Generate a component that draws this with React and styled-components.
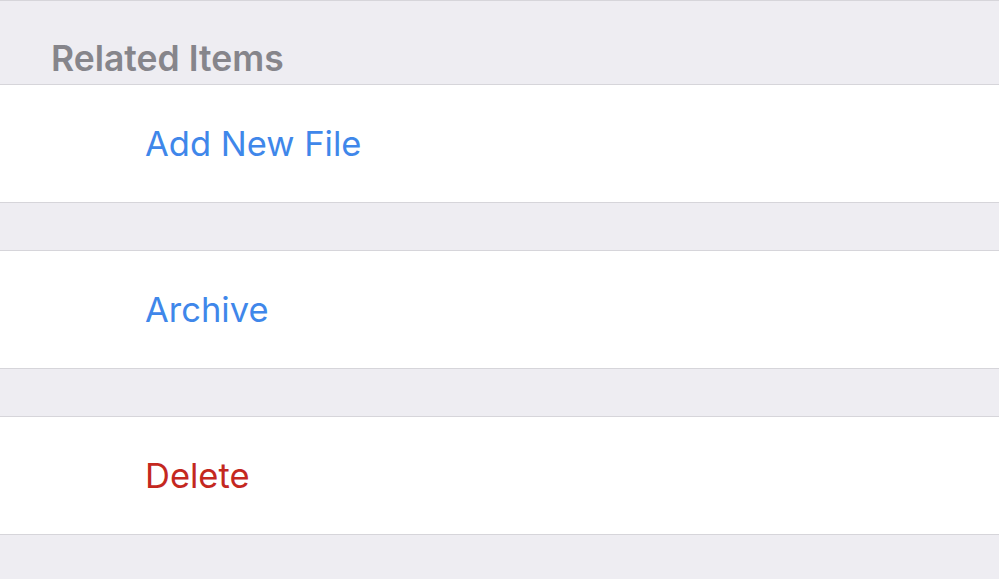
import React from "react";
import styled, { createGlobalStyle } from "styled-components";

const Global = createGlobalStyle`
  html, body { margin: 0; padding: 0; background: #eeedf2; }
  body { font-family: Inter, "Liberation Sans", sans-serif; -webkit-font-smoothing: antialiased; }
`;

const Page = styled.div`
  width: 999px;
  height: 579px;
  overflow: hidden;
  background: #eeedf2;
  border-top: 1px solid #d6d5da;
  box-sizing: border-box;
  display: flex;
  flex-direction: column;
`;

const SectionHeader = styled.div`
  flex-shrink: 0;
  height: 83px;
  box-sizing: border-box;
  padding: 0 0 4px 51px;
  display: flex;
  align-items: flex-end;
  font-size: 35.5px;
  line-height: 42px;
  font-weight: 600;
  color: #86858b;
`;

const Group = styled.div`
  flex-shrink: 0;
  display: flex;
  flex-direction: column;
  margin-bottom: ${(p) => p.$gap}px;
`;

const Row = styled.button`
  all: unset;
  box-sizing: border-box;
  height: 119px;
  background: #fff;
  border-top: 1px solid #d6d5da;
  border-bottom: 1px solid #d6d5da;
  display: flex;
  align-items: center;
  padding-left: 145px;
  font-family: Inter, "Liberation Sans", sans-serif;
  font-size: 34.5px;
  font-weight: 400;
  color: ${(p) => (p.$destructive ? "#c4281f" : "#3f87ea")};
  cursor: pointer;
`;

const items = [
  { label: "Add New File" },
  { label: "Archive" },
  { label: "Delete", destructive: true },
];

export default function App() {
  return (
    <>
      <Global />
      <Page>
        <SectionHeader>Related Items</SectionHeader>
        {items.map((it) => (
          <Group key={it.label} $gap={47}>
            <Row $destructive={it.destructive}>{it.label}</Row>
          </Group>
        ))}
      </Page>
    </>
  );
}
